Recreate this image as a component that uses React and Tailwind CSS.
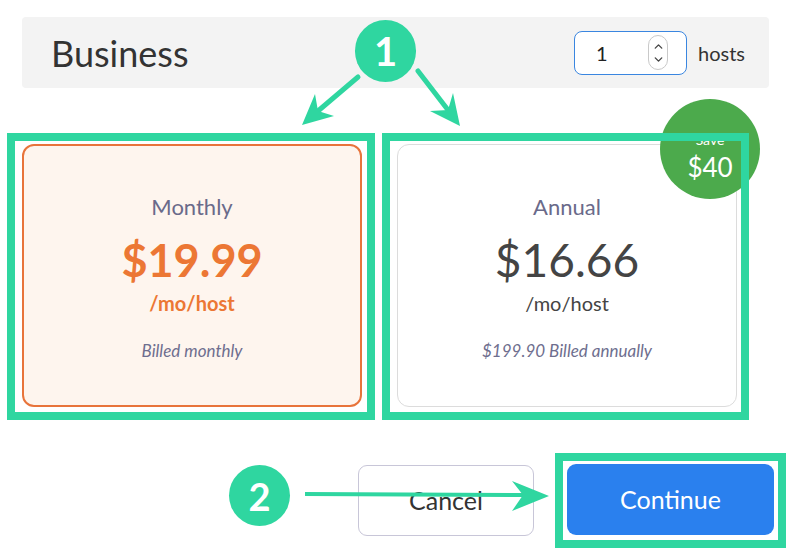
import { ChevronUp, ChevronDown } from 'lucide-react'

const TEAL = '#2fd6a0'

function Frame({ className = '', children }) {
  return (
    <div className={`relative ${className}`}>
      {children}
      {/* annotation outline sits above everything inside */}
      <div className="pointer-events-none absolute inset-0 z-20 border-8 border-[#2fd6a0]" />
    </div>
  )
}

function Annotations() {
  return (
    <>
      <div className="absolute left-[355px] top-[20px] z-30 flex h-[62px] w-[61px] items-center justify-center rounded-full bg-[#2fd6a0] text-[40px] font-bold leading-none text-white">
        1
      </div>
      <div className="absolute left-[229px] top-[465px] z-30 flex h-[61px] w-[61px] items-center justify-center rounded-full bg-[#2fd6a0] text-[38px] font-bold leading-none text-white">
        2
      </div>
      <svg className="pointer-events-none absolute left-0 top-0 z-30" width="789" height="553" viewBox="0 0 789 553">
        {/* left arrow */}
        <line x1="358" y1="77" x2="318" y2="111" stroke={TEAL} strokeWidth="5" strokeLinecap="round" />
        <polygon points="302,125 315,94 318,111 334,116" fill={TEAL} />
        {/* right arrow */}
        <line x1="418" y1="71" x2="448" y2="110" stroke={TEAL} strokeWidth="5" strokeLinecap="round" />
        <polygon points="460,126 453,93 448,110 430,111" fill={TEAL} />
        {/* bottom arrow */}
        <line x1="305" y1="494" x2="526" y2="495" stroke={TEAL} strokeWidth="4" />
        <polygon points="549,496 512,481 523,495 512,511" fill={TEAL} />
      </svg>
    </>
  )
}

export default function App() {
  return (
    <div
      className="relative h-[553px] w-[789px] overflow-hidden bg-white"
      style={{ fontFamily: 'Lato, "Open Sans", sans-serif' }}
    >
      {/* header */}
      <div className="ml-[22px] mt-[17px] flex h-[71px] w-[747px] items-center justify-between rounded-[4px] bg-[#f3f3f3] pl-[29px] pr-[24px]">
        <span className="text-[36px] leading-none text-[#333]">Business</span>
        <div className="flex items-center">
          <div className="flex h-[44px] w-[113px] items-center justify-between rounded-[8px] border-[1.5px] border-[#3a86e0] bg-white pl-[21px] pr-[18px]">
            <span className="text-[20px] text-[#222]">1</span>
            <div className="flex h-[35px] w-[20px] flex-col items-center justify-center rounded-full border border-[#c9c9c9] text-[#444]">
              <ChevronUp size={13} strokeWidth={2.5} />
              <ChevronDown size={13} strokeWidth={2.5} />
            </div>
          </div>
          <span className="ml-[11px] text-[20px] text-[#333]">hosts</span>
        </div>
      </div>

      {/* plans */}
      <div className="ml-[7px] mt-[45px] flex gap-[7px]">
        <Frame className="h-[287px] w-[368px] pl-[15px] pt-[11px]">
          <div className="flex h-[263px] w-[340px] flex-col items-center rounded-[12px] border-2 border-[#e8743b] bg-[#fef5ee] pt-[47px]">
            <span className="text-[22px] leading-[28px] text-[#6a6a8a]">Monthly</span>
            <span className="mt-[11px] text-[45px] font-bold leading-[56px] text-[#ec7734]">$19.99</span>
            <span className="mt-[2px] text-[20px] font-bold leading-[26px] text-[#ec7734]">/mo/host</span>
            <span className="mt-[25px] text-[17px] italic leading-[20px] text-[#6e6e8e]">Billed monthly</span>
          </div>
        </Frame>

        <Frame className="h-[287px] w-[367px] pl-[15px] pt-[11px]">
          <div className="flex h-[263px] w-[340px] flex-col items-center rounded-[12px] border border-[#dcdcdc] bg-white pt-[48px]">
            <span className="text-[22px] leading-[28px] text-[#6a6a8a]">Annual</span>
            <span className="mt-[11px] text-[46px] leading-[56px] text-[#444]">$16.66</span>
            <span className="mt-[2px] text-[20px] leading-[26px] text-[#444]">/mo/host</span>
            <span className="mt-[25px] text-[17px] italic leading-[20px] text-[#6e6e8e]">$199.90 Billed annually</span>
          </div>
          <div className="absolute left-[278px] top-[-34px] z-10 flex h-[100px] w-[100px] flex-col items-center rounded-full bg-[#4caa4c] pt-[33px] text-white">
            <span className="text-[14px] leading-[16px]">Save</span>
            <span className="mt-[4px] text-[26px] leading-[30px]">$40</span>
          </div>
        </Frame>
      </div>

      {/* actions */}
      <div className="mt-[33px] flex items-center justify-end pr-[3px]">
        <button className="mr-[21px] flex h-[71px] w-[176px] items-center justify-center rounded-[9px] border border-[#c8c6d8] bg-white text-[25px] text-[#333]">
          Cancel
        </button>
        <Frame className="h-[95px] w-[231px] pl-[12px] pt-[11px]">
          <button className="flex h-[71px] w-[207px] items-center justify-center rounded-[9px] bg-[#2a80ee] text-[25px] text-white">
            Continue
          </button>
        </Frame>
      </div>

      <Annotations />
    </div>
  )
}
